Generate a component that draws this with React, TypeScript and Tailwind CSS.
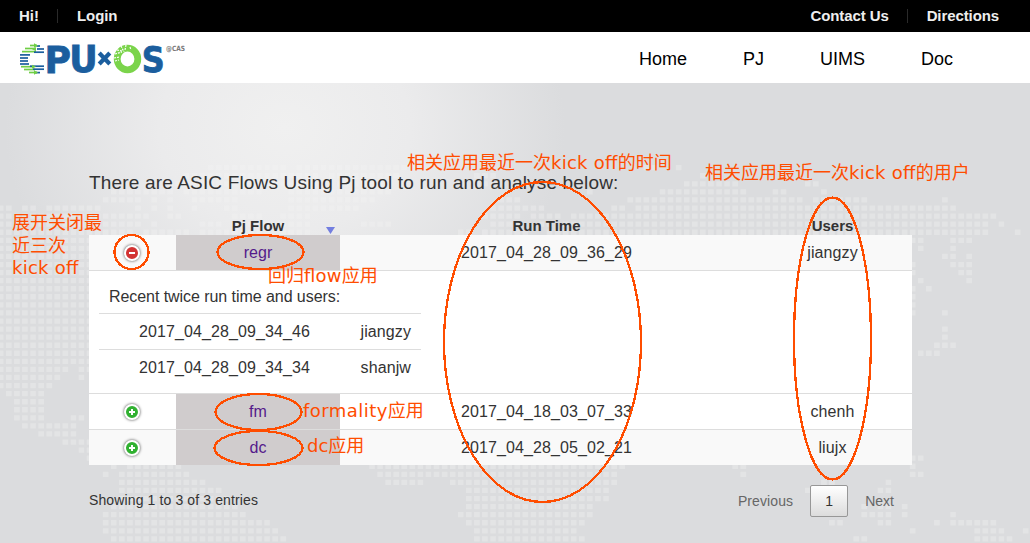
import React from "react";

const PITCH = 8.07;

// Each entry: [row, first column, last column, first column, last column, ...]
const MAP_ROWS: number[][] = [
  [-4, 25, 32, 33, 34, 36, 49, 79, 80, 83, 83],
  [-3, 22, 38, 40, 48, 58, 60, 86, 86],
  [-2, 20, 38, 41, 46, 58, 59, 84, 90, 99, 100],
  [-1, 13, 20, 22, 31, 35, 47, 72, 72, 81, 91, 95, 96, 101, 101],
  [0, 12, 16, 18, 18, 20, 20, 23, 28, 35, 45, 61, 63, 77, 98, 100, 106, 116, 116],
  [1, -1, 0, 2, 3, 5, 11, 16, 16, 18, 18, 20, 20, 23, 23, 27, 28, 35, 43, 60, 66, 75, 76, 78, 117],
  [2, -1, 11, 12, 17, 20, 21, 28, 31, 34, 37, 59, 63, 65, 68, 70, 122],
  [3, -1, 16, 18, 18, 24, 26, 28, 32, 34, 37, 44, 47, 60, 63, 66, 67, 69, 121, 123, 123],
  [4, -1, 15, 17, 22, 24, 32, 34, 37, 56, 57, 59, 64, 67, 121, 125, 125],
  [5, -1, 10, 112, 113, 117, 119],
  [6, -1, 10, 113, 113, 117, 117],
  [7, -1, 10, 116, 117, 119, 119],
  [8, -1, 10, 112, 112, 117, 119],
  [9, -1, 10, 112, 112, 118, 119],
  [10, -1, 10, 113, 113, 119, 119],
  [11, -1, 10, 112, 112, 114, 114],
  [12, -1, 10, 112, 112],
  [13, -1, 10, 112, 112],
  [14, -1, 10, 112, 112, 116, 116],
  [15, -1, 10],
  [16, -1, 10, 116, 116],
  [17, -1, 10, 116, 116],
  [18, -1, 10, 115, 117],
  [19, -1, 10, 113, 115],
  [20, -1, 10],
  [21, -1, 7, 9, 10],
  [22, -1, 6, 9, 9],
  [23, -1, 5],
  [24, 0, 4],
  [25, 1, 4],
  [26, 1, 4],
  [27, 1, 4, 8, 9],
  [28, 2, 8],
  [29, 4, 8],
  [30, 7, 10],
  [31, 9, 10],
  [32, 10, 10, 112, 113],
  [33, 13, 13, 15, 21, 45, 76, 90, 91, 112, 112],
  [34, 12, 12, 14, 22, 46, 75, 91, 91, 112, 113],
  [35, 14, 24, 47, 51, 55, 75, 101, 102, 109, 109],
  [36, 14, 26, 57, 74, 99, 99, 108, 109],
  [37, 14, 27, 57, 74],
  [38, 13, 28, 57, 72, 106, 106, 108, 109, 111, 111],
  [39, 12, 29, 56, 72, 106, 109, 111, 111, 117, 117],
  [40, 12, 32, 57, 71, 102, 103, 108, 109, 115, 115, 117, 122],
  [41, 12, 33, 58, 70, 112, 112, 120, 123, 126, 126],
  [42, 13, 34, 58, 71, 105, 106, 120, 124],
];

function mapPath() {
  let d = "";
  for (const [row, ...runs] of MAP_ROWS) {
    const y = (114.3 + row * PITCH).toFixed(1);
    for (let i = 0; i < runs.length; i += 2) {
      for (let c = runs[i]; c <= runs[i + 1]; c++) {
        d += `M${(6 + c * PITCH).toFixed(1)} ${y}h5.7v5.3h-5.7z`;
      }
    }
  }
  return d;
}

function Logo() {
  const bars: [number, number, number, string][] = [
    [30, 37, 45.5, "#6fce45"], [36.5, 40, 46, "#1b5e9e"], [25, 36, 48.5, "#6fce45"], [37, 44, 49, "#1b5e9e"],
    [22, 36, 51.6, "#6fce45"], [34, 44, 52.2, "#1b5e9e"], [20, 30, 54.9, "#1b5e9e"], [20, 28, 58, "#1b5e9e"],
    [20, 28, 61, "#1b5e9e"], [20, 29, 64, "#1b5e9e"], [21, 34, 66.7, "#6fce45"], [30, 44, 66.2, "#1b5e9e"],
    [24, 35, 69.5, "#6fce45"], [33, 44, 69.2, "#1b5e9e"], [29, 37, 72.5, "#6fce45"], [36, 40, 72.6, "#1b5e9e"],
  ];
  return (
    <svg className="block h-[51px] w-[190px]" viewBox="0 32 190 51" aria-label="CPU×OS">
      {bars.map(([x1, x2, y, color], i) => (
        <path key={i} d={`M${x1} ${y}H${x2}`} stroke={color} strokeWidth="1.7" />
      ))}
      <path d="M34 43.3l4 2.2-4 2.2zM32 49.3l4-2v4zM32 64.7l4 2-4 2zM34 70.3l4 2.2-4 2.2z" fill="#6fce45" />
      <g fill="#1b5e9e" stroke="#1b5e9e" strokeWidth="0.8" fontFamily="DejaVu Sans" fontWeight="700" fontSize="37.5">
        <text x="44.6" y="72.6" textLength="26.5" lengthAdjust="spacingAndGlyphs">P</text>
        <text x="69.3" y="72.3" fontSize="36.8" textLength="28.5" lengthAdjust="spacingAndGlyphs">U</text>
        <text x="141.8" y="72.2" fontSize="36" textLength="23" lengthAdjust="spacingAndGlyphs">S</text>
      </g>
      <path d="M99.2 53L109.8 64M109.8 53L99.2 64" stroke="#1b5e9e" strokeWidth="4.2" />
      <ellipse cx="127.5" cy="59" rx="10.3" ry="10.8" fill="none" stroke="#7bd44b" strokeWidth="6.8" />
      <path d="M114 58l6-1M115 54l7-2M117 50l5 1M121 46l3 6M126 45l-1 5M130 47l1 3M115 61l4-1" stroke="white" strokeWidth="1.2" strokeDasharray="2 1" />
      <text x="166" y="50.6" fontFamily="DejaVu Sans" fontWeight="700" fontSize="7.2" fill="#777" textLength="19" lengthAdjust="spacingAndGlyphs">@CAS</text>
    </svg>
  );
}

function Toggle({ open }: { open?: boolean }) {
  return (
    <div
      className={`flex size-4 items-center justify-center rounded-full border-2 border-white shadow-[0_0_3px_#444] ${
        open ? "bg-[#d33333]" : "bg-[#31b131]"
      }`}
    >
      <svg className="size-3" viewBox="0 0 12 12">
        <path d={open ? "M3 6h6" : "M3 6h6M6 3v6"} stroke="white" strokeWidth="2" />
      </svg>
    </div>
  );
}

function Row({ flow, time, user, open, tint }: { flow: string; time: string; user: string; open?: boolean; tint?: boolean }) {
  return (
    <div className={`grid h-[35px] grid-cols-[87px_164px_413px_159px] text-center leading-[35px] ${tint ? "bg-[#f9f9f9]" : "bg-white"}`}>
      <div className="flex items-center justify-center pr-px pt-px"><Toggle open={open} /></div>
      <div className="bg-[#d0cccd] text-[#551a8b]">{flow}</div>
      <div className="tracking-[0.1px]">{time}</div>
      <div className="tracking-[0.1px]">{user}</div>
    </div>
  );
}

function Note({ className, children }: { className: string; children: React.ReactNode }) {
  return (
    <div className={`absolute whitespace-nowrap font-['DejaVu_Sans','Noto_Sans_CJK_SC',sans-serif] text-[18px] leading-[22.5px] text-[#ff4d00] ${className}`}>
      {children}
    </div>
  );
}

function KickOff() {
  return <span className="tracking-[0.25px] [font-feature-settings:'liga']">kick off</span>;
}

export default function App() {
  return (
    <div className="relative flex h-[543px] w-[1030px] flex-col overflow-hidden font-['Liberation_Sans',sans-serif] text-[16px] text-[#333]">
      <header className="flex h-8 shrink-0 items-center justify-between bg-black pl-[19px] pr-[31px] text-[15px] font-bold text-[#eee]">
        <div className="flex items-center">
          <span>Hi!</span>
          <i className="ml-[18px] mr-[19px] h-[14px] w-px bg-[#2a2a2a]" />
          <span className="tracking-[-0.1px]">Login</span>
        </div>
        <div className="flex items-center tracking-[-0.1px]">
          <span>Contact Us</span>
          <i className="ml-[18px] mr-[19px] h-[14px] w-px bg-[#2a2a2a]" />
          <span>Directions</span>
        </div>
      </header>

      <nav className="flex h-[51px] shrink-0 justify-between bg-white text-[18px] leading-[54px] text-black">
        <Logo />
        <div className="flex gap-14 pr-[77px]">
          <span>Home</span>
          <span>PJ</span>
          <span>UIMS</span>
          <span>Doc</span>
        </div>
      </nav>

      <main className="relative grow bg-[#dbdcde] bg-[radial-gradient(ellipse_280px_230px_at_285px_45px,#f0f0f0_0%,#ebebec_45%,#dbdcde_100%)]">
        <svg className="absolute inset-0 h-[460px] w-[1030px]" viewBox="0 0 1030 460">
          <path d={mapPath()} fill="#f4f4f3" fillOpacity="0.34" />
        </svg>

        <section className="relative ml-[89px] w-[823px] pt-[88px]">
          <h1 className="h-[45px] text-[19px] leading-[24px] tracking-[0.165px]">There are ASIC Flows Using Pj tool to run and analyse below:</h1>

          <div className="grid h-[19px] grid-cols-[87px_164px_413px_159px] text-center text-[15px] font-bold leading-[20px]">
            <span />
            <span className="relative">
              Pj Flow
              <svg className="absolute right-[5px] top-[11px] h-[7px] w-[9px]" viewBox="0 0 9 7">
                <path d="M0 0h9L4.5 7z" fill="#737ee0" />
              </svg>
            </span>
            <span>Run Time</span>
            <span>Users</span>
          </div>

          <Row flow="regr" time="2017_04_28_09_36_29" user="jiangzy" open tint />
          <div className="h-[124px] border-y border-[#ddd] bg-white px-[10px] pt-[8px]">
            <div className="h-[34px] pl-[10px] leading-[35px] tracking-[-0.06px]">Recent twice run time and users:</div>
            <div className="flex h-9 w-[322px] justify-between border-t border-[#ddd] pl-10 pr-[10px] leading-[36px] tracking-[0.1px]">
              <span>2017_04_28_09_34_46</span>
              <span>jiangzy</span>
            </div>
            <div className="flex h-9 w-[322px] justify-between border-t border-[#ddd] pl-10 pr-[10px] leading-[36px] tracking-[0.1px]">
              <span>2017_04_28_09_34_34</span>
              <span>shanjw</span>
            </div>
          </div>
          <Row flow="fm" time="2017_04_18_03_07_33" user="chenh" />
          <div className="h-px bg-[#ddd]" />
          <Row flow="dc" time="2017_04_28_05_02_21" user="liujx" tint />

          <footer className="flex justify-between pt-5 text-[14px]">
            <p className="leading-[31px] tracking-[0.12px]">Showing 1 to 3 of 3 entries</p>
            <div className="flex pr-[18px] leading-[32px] text-[#666]">
              <span className="tracking-[0.1px]">Previous</span>
              <span className="ml-[17px] mr-[17px] h-8 w-[38px] rounded-[2px] border border-[#979797] bg-linear-to-b from-white to-[#dcdcdc] text-center leading-[31px] text-[#333]">1</span>
              <span>Next</span>
            </div>
          </footer>
        </section>
      </main>

      <svg className="absolute inset-0 h-[543px] w-[1030px]" viewBox="0 0 1030 543" fill="none" stroke="#ff4d00" strokeWidth="2.3" shapeRendering="crispEdges">
        <ellipse cx="131.5" cy="252" rx="17" ry="17" />
        <ellipse cx="260.5" cy="252" rx="43" ry="17" />
        <ellipse cx="258.5" cy="412" rx="43" ry="18" />
        <ellipse cx="258.5" cy="448" rx="44" ry="17" />
        <ellipse cx="542.5" cy="342" rx="98.5" ry="160" />
        <ellipse cx="832.5" cy="338.5" rx="38.5" ry="141" />
      </svg>
      <Note className="left-[407px] top-[152px]">相关应用最近一次<KickOff />的时间</Note>
      <Note className="left-[705px] top-[162px]">相关应用最近一次<KickOff />的用户</Note>
      <Note className="left-[12px] top-[212px]">
        展开关闭最<br />近三次<br /><KickOff />
      </Note>
      <Note className="left-[268px] top-[265px]">回归<span className="tracking-[0.25px] [font-feature-settings:'liga']">flow</span>应用</Note>
      <Note className="left-[303px] top-[400px]"><span className="tracking-[0.45px]">formality</span>应用</Note>
      <Note className="left-[307px] top-[435px]">dc应用</Note>
    </div>
  );
}
